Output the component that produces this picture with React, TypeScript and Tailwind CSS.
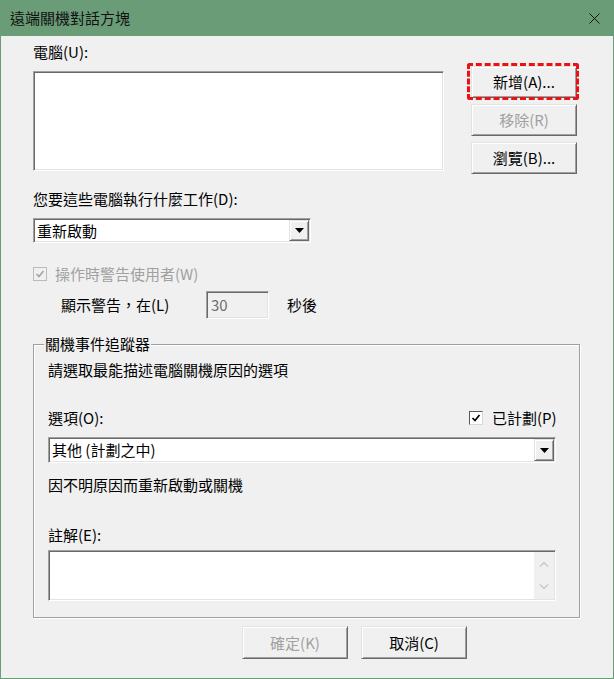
import React from "react";

const sunken =
  "border border-t-[#a0a0a0] border-l-[#a0a0a0] border-b-white border-r-white shadow-[inset_1px_1px_0_#696969,inset_-1px_-1px_0_#e3e3e3]";
const raised =
  "border border-t-[#e3e3e3] border-l-[#e3e3e3] border-b-[#696969] border-r-[#696969] shadow-[inset_1px_1px_0_#ffffff,inset_-1px_-1px_0_#a0a0a0] bg-[#f0f0f0]";

function Btn({
  children,
  disabled,
  h,
}: {
  children: React.ReactNode;
  disabled?: boolean;
  h: string;
}) {
  return (
    <div
      className={`flex items-center justify-center w-[106px] ${h} ${raised} ${
        disabled ? "text-[#a0a0a0]" : "text-black"
      }`}
    >
      {children}
    </div>
  );
}

function DropArrow() {
  return (
    <div className={`w-[20px] h-full flex items-center justify-center ${raised}`}>
      <svg width="9" height="5" viewBox="0 0 9 5">
        <polygon points="0,0 9,0 4.5,5" fill="#000" />
      </svg>
    </div>
  );
}

function Combo({ text, w }: { text: string; w: string }) {
  return (
    <div className={`${w} bg-white ${sunken} flex items-stretch p-[1px]`}>
      <div className="flex-1 flex items-center pl-[2px] whitespace-nowrap">{text}</div>
      <DropArrow />
    </div>
  );
}

function Check({ disabled }: { disabled?: boolean }) {
  return (
    <div
      className={`w-[14px] h-[14px] flex items-center justify-center border ${
        disabled
          ? "bg-[#f0f0f0] border-[#bcbcbc]"
          : "bg-white border-t-[#5a5a5a] border-l-[#5a5a5a] border-b-[#d8d8d8] border-r-[#d8d8d8]"
      }`}
    >
      <svg width="10" height="10" viewBox="0 0 10 10">
        <polyline
          points="1.5,5 4,7.5 8.5,2"
          fill="none"
          stroke={disabled ? "#a6a6a6" : "#000"}
          strokeWidth="1.7"
        />
      </svg>
    </div>
  );
}

export default function App() {
  return (
    <div className="w-[614px] h-[679px] bg-[#f0f0f0] border-x border-b border-[#6a9d77] flex flex-col font-['Noto_Sans_CJK_TC','Noto_Sans',sans-serif] text-[15px] leading-[20px] text-black overflow-hidden">
      {/* Title bar */}
      <div className="h-[36px] shrink-0 bg-[#6a9d77] flex items-center justify-between pl-[9px] pr-[13px]">
        <span className="text-[#111]">遠端關機對話方塊</span>
        <svg width="11" height="11" viewBox="0 0 11 11">
          <line x1="0.5" y1="0.5" x2="10.5" y2="10.5" stroke="#111" strokeWidth="1" />
          <line x1="10.5" y1="0.5" x2="0.5" y2="10.5" stroke="#111" strokeWidth="1" />
        </svg>
      </div>

      <div className="pl-[32px] flex flex-col">
        {/* Row 1 */}
        <div className="flex items-start h-[135px]">
          <div className="w-[411px] flex flex-col">
            <div className="mt-[6px]">電腦(U):</div>
            <div className={`mt-[9px] h-[100px] bg-white ${sunken}`} />
          </div>
          <div className="ml-[27px] mt-[30px] flex flex-col gap-[6px]">
            <div className="relative">
              <Btn h="h-[32px]">新增(A)...</Btn>
              <div className="absolute -left-[4px] -top-[3px] -right-[2px] -bottom-[2px] border-[3px] border-dashed border-[#ee1111] rounded-[3px] pointer-events-none" />
            </div>
            <Btn h="h-[32px]" disabled>
              移除(R)
            </Btn>
            <Btn h="h-[32px]">瀏覽(B)...</Btn>
          </div>
        </div>

        <div className="mt-[18px]">您要這些電腦執行什麼工作(D):</div>
        <div className="mt-[9px] h-[25px] flex">
          <Combo text="重新啟動" w="w-[278px]" />
        </div>

        <div className="mt-[21px] h-[20px] flex items-center">
          <Check disabled />
          <span className="ml-[8px] text-[#a0a0a0]">操作時警告使用者(W)</span>
        </div>

        <div className="mt-[7px] h-[28px] flex items-center">
          <span className="ml-[28px] w-[145px]">顯示警告，在(L)</span>
          <div className={`w-[63px] h-[28px] bg-[#f0f0f0] ${sunken} flex items-center pl-[4px] text-[#6d6d6d]`}>
            30
          </div>
          <span className="ml-[18px]">秒後</span>
        </div>

        {/* Group box */}
        <div className="relative mt-[25px] w-[547px] border border-[#a0a0a0] shadow-[1px_1px_0_#ffffff,inset_1px_1px_0_#ffffff] pl-[14px] pb-[16px] flex flex-col">
          <span className="absolute -top-[11px] left-[10px] px-[1px] bg-[#f0f0f0]">
            關機事件追蹤器
          </span>
          <div className="mt-[15px]">請選取最能描述電腦關機原因的選項</div>
          <div className="mt-[28px] h-[20px] flex items-center">
            <span className="w-[421px]">選項(O):</span>
            <Check />
            <span className="ml-[9px]">已計劃(P)</span>
          </div>
          <div className="mt-[9px] h-[26px] flex">
            <Combo text="其他 (計劃之中)" w="w-[508px]" />
          </div>
          <div className="mt-[12px]">因不明原因而重新啟動或關機</div>
          <div className="mt-[30px]">註解(E):</div>
          <div className={`mt-[5px] w-[508px] h-[51px] bg-white ${sunken} p-[1px] flex`}>
            <div className="flex-1" />
            <div className="w-[20px] bg-[#f0f0f0] flex flex-col items-center justify-between pt-[9px] pb-[9px]">
              <svg width="10" height="6" viewBox="0 0 10 6">
                <polyline points="1,5.5 5,1.5 9,5.5" fill="none" stroke="#c4c4c4" strokeWidth="1.2" />
              </svg>
              <svg width="10" height="6" viewBox="0 0 10 6">
                <polyline points="1,0.5 5,4.5 9,0.5" fill="none" stroke="#c4c4c4" strokeWidth="1.2" />
              </svg>
            </div>
          </div>
        </div>

        {/* Bottom buttons */}
        <div className="mt-[8px] ml-[209px] flex gap-[13px]">
          <Btn h="h-[33px]" disabled>
            確定(K)
          </Btn>
          <Btn h="h-[33px]">取消(C)</Btn>
        </div>
      </div>
    </div>
  );
}
